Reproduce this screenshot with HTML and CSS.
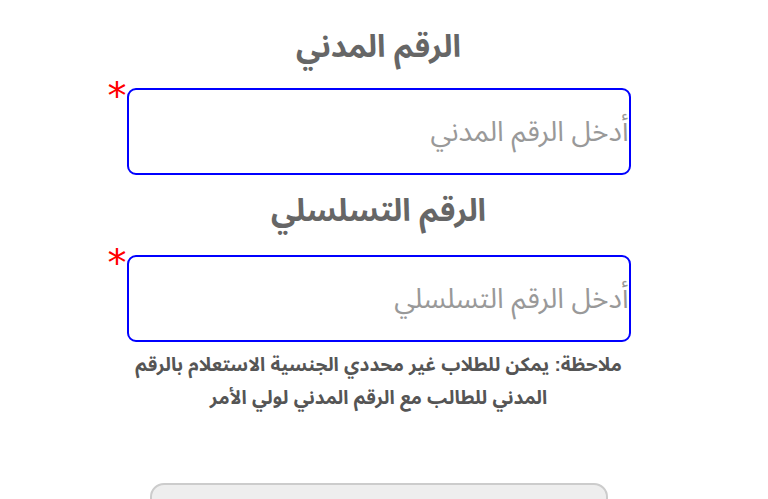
FILE: index.html
```html
<!DOCTYPE html>
<html lang="ar" dir="rtl">

<head>
    <meta charset="UTF-8" />
    <meta name="viewport" content="width=device-width, initial-scale=1.0" />
    <title>الاستعلام</title>
    <link rel="stylesheet" href="styles.css">
</head>

<body>

    <div class="page">
        <!-- Civil ID -->
        <h2 class="label">الرقم المدني</h2>
        <div class="field">
            <span class="req">*</span>
            <input type="text" class="text-input" placeholder="أدخل الرقم المدني" />
        </div>

        <!-- Serial number -->
        <h2 class="label">الرقم التسلسلي</h2>
        <div class="field">
            <span class="req">*</span>
            <input type="text" class="text-input" placeholder="أدخل الرقم التسلسلي" />
        </div>

        <p class="note">ملاحظة: يمكن للطلاب غير محددي الجنسية الاستعلام بالرقم المدني للطالب مع الرقم المدني لولي الأمر</p>

        <button class="submit-btn">استعلام</button>
    </div>

</body>

</html>
```

FILE: styles.css
```css
/* === Base === */
* {
    margin: 0;
    padding: 0;
    box-sizing: border-box;
}

body {
    font-family: Arial, 'Noto Sans Arabic', 'DejaVu Sans', sans-serif;
    background-color: #FFFFFF;
    color: #555555;
}

.page {
    width: 757px;
    margin-right: 11px;
    padding-top: 22px;
    display: flex;
    flex-direction: column;
    align-items: center;
}

/* === Labels === */
.label {
    font-size: 31px;
    font-weight: bold;
    color: #666666;
    line-height: 50px;
    text-align: center;
}

.field + .label {
    margin-top: -3px;
    margin-bottom: 3px;
}

/* === Inputs === */
.field {
    position: relative;
    width: 504px;
    margin-top: 16px;
    margin-bottom: 14px;
}

.req {
    position: absolute;
    top: -11px;
    left: -19px;
    color: #FF0000;
    font-family: 'DejaVu Sans', sans-serif;
    font-size: 38px;
    line-height: 1;
}

.text-input {
    width: 100%;
    height: 87px;
    border: 2px solid #0000FF;
    border-radius: 9px;
    padding: 0;
    font-family: inherit;
    font-size: 28px;
    color: #333333;
    outline: none;
    direction: rtl;
}

.text-input::placeholder {
    color: #999999;
}

/* === Note === */
.note {
    width: 500px;
    font-size: 19px;
    font-weight: bold;
    color: #555555;
    line-height: 33px;
    text-align: center;
    margin-top: -8px;
}

/* === Button === */
.submit-btn {
    width: 458px;
    margin-top: 69px;
    padding: 40px 0 14px;
    background-color: #EEEEEE;
    border: 2px solid #CCCCCC;
    border-radius: 14px;
    font-family: inherit;
    font-size: 22px;
    color: #333333;
}
```
